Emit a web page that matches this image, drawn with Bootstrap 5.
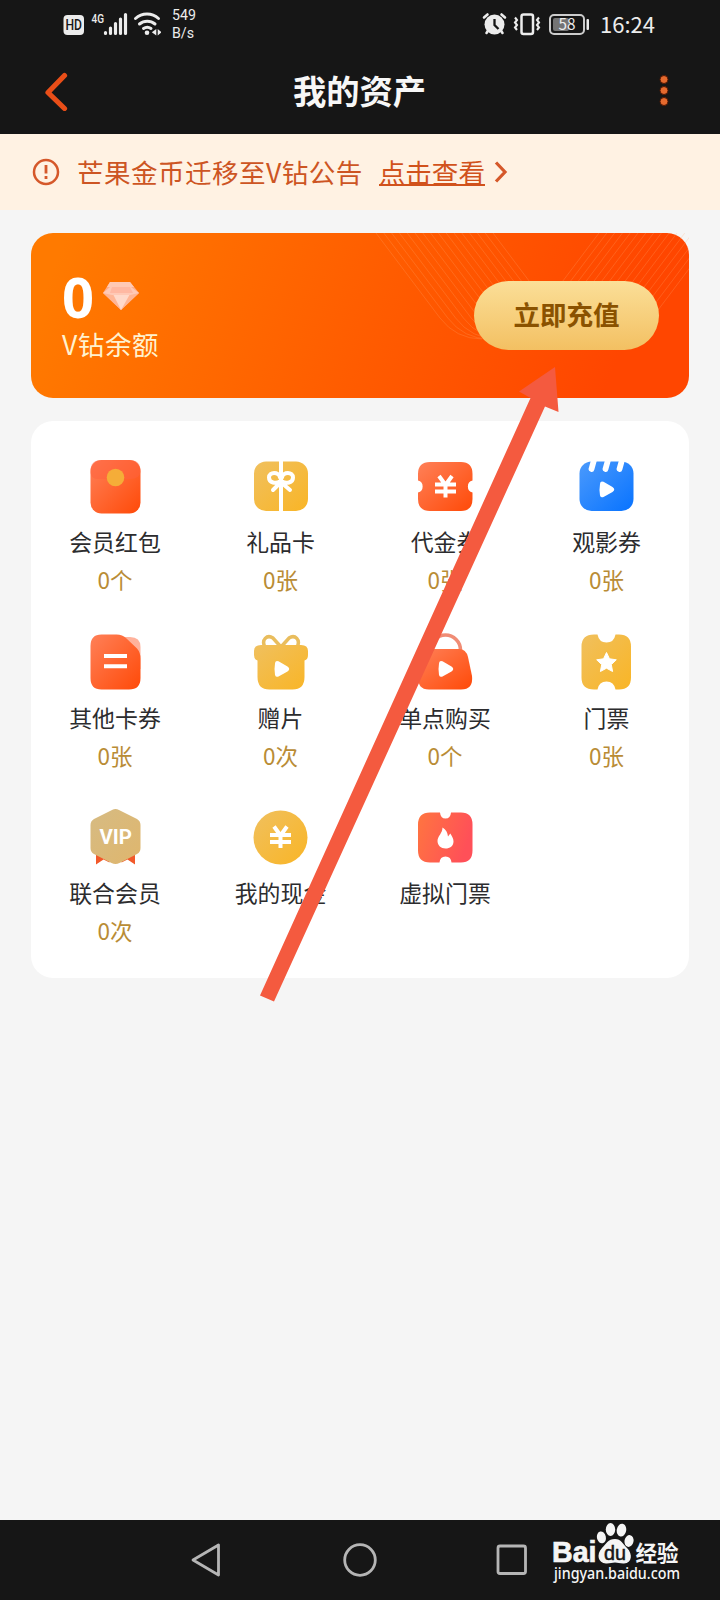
<!DOCTYPE html>
<html lang="zh-CN">
<head>
<meta charset="utf-8">
<meta name="viewport" content="width=device-width, initial-scale=1">
<title>我的资产</title>
<link rel="stylesheet" href="https://cdn.jsdelivr.net/npm/bootstrap@5.3.0/dist/css/bootstrap.min.css">
<style>
  body { background: #f5f5f5; font-family: "Noto Sans CJK SC", "Noto Sans", sans-serif; color: #2c2c2e; }
  .phone { width: 720px; height: 1600px; overflow: hidden; }
  .dark-bar { background: #161616; }
  svg { display: block; flex: none; }
  .status { height: 48px; padding: 0 66px 0 63px; color: #ececec; }
  .speed { font: 14.2px/18px Roboto, sans-serif; margin-left: 11px; }
  .clock { font-size: 22px; line-height: 46px; height: 48px; width: 54px; margin-left: 11px; white-space: nowrap; }
  .title-bar { height: 86px; padding: 0 50px 0 44px; }
  .title-bar h1 { font-size: 33.3px; line-height: 84px; height: 86px; font-weight: 700; color: #f7f7f7; margin-right: 8px !important; }
  .notice { height: 76px; background: #fff2e3; color: #cd5523; font-size: 26.6px; line-height: 74px; padding-left: 32px; }
  .notice-text { margin-left: 17px; letter-spacing: .4px; }
  .notice a { color: #d1521c; text-decoration: none; position: relative; margin-left: 16px; }
  .notice a::after { content: ""; position: absolute; left: 0; right: 0; bottom: 23px; height: 2px; background: #d1521c; }
  .balance { height: 165px; margin: 23px 31px 0; border-radius: 22px; padding: 0 30px 0 31px; background: linear-gradient(112deg, #ff7a00 5%, #ff5c00 52%, #ff4600 88%); }
  .rays { left: 0; top: 0; }
  .amount { font: 700 56px/56px "Open Sans", "Noto Sans", sans-serif; color: #fff; width: 32px; }
  .caption { font-size: 26.5px; line-height: 40px; letter-spacing: .6px; color: #fff2cf; }
  .recharge { width: 185px; height: 69px; font-size: 26.5px; font-weight: 700; color: #8a5200; border: 0; background: linear-gradient(#fbdf98, #f3c062); padding: 0 0 3px; position: relative; }
  .assets { height: 557px; margin: 23px 31px 0; border-radius: 22px; background: #fff; display: grid; grid-template-columns: 168px 163px 166px 157px; grid-auto-rows: 175.5px; padding-top: 36px; overflow: hidden; }
  .asset-name { font-size: 22.9px; line-height: 34px; margin-top: 7px; }
  .asset-count { font-size: 22.5px; line-height: 34px; margin-top: 4px; color: #b98c35; }
  .nav-keys { height: 80px; padding-left: 191px; }
  .pointer { left: 0; top: 0; pointer-events: none; }
</style>
</head>
<body>
<div class="phone position-relative d-flex flex-column">

  <header class="dark-bar">
    <div class="status d-flex align-items-center">
      <svg width="98" height="48" viewBox="63 0 98 48" fill="#ececec">
        <rect x="63.500" y="15" width="20.500" height="20" rx="4"/>
        <text x="65.500" y="30" font-family="Roboto" font-weight="500" font-size="14" textLength="16.500" lengthAdjust="spacingAndGlyphs" fill="#161616">HD</text>
        <text x="91.500" y="23" font-family="Roboto" font-weight="500" font-size="13" textLength="12.500" lengthAdjust="spacingAndGlyphs">4G</text>
        <g stroke="#ececec" stroke-width="3.200" stroke-linecap="round"><path d="M105.500 32.500v1M110.500 28v5.500M115.500 23.500v10M120.500 19v14.500M125.500 14.500v19"/></g>
        <g fill="none" stroke="#ececec" stroke-width="3" stroke-linecap="round"><path d="M135.500 18.500a17 17 0 0 1 23 0M139.500 24a12 12 0 0 1 15.500 0M143.500 28.500a6.500 6.500 0 0 1 7.500 0"/></g>
        <circle cx="147" cy="32.800" r="2.300"/><path d="M156.300 29v6.500l-4.500-3.200zM157.700 29l4 3.300-4 3.200z"/>
      </svg>
      <div class="speed">549<br>B/s</div>
      <svg class="ms-auto" width="107" height="48" viewBox="482 0 107 48" fill="#ececec">
        <path d="M484 17.500l3.500-3M505 17.500l-3.500-3M486.500 33l2-3M502.500 33l-2-3" stroke="#ececec" stroke-width="2.600" stroke-linecap="round"/>
        <circle cx="494.500" cy="24.500" r="10"/>
        <path d="M494.500 19v6l4 4" fill="none" stroke="#161616" stroke-width="2.300"/>
        <rect x="521.500" y="14.500" width="11.500" height="19.500" rx="2" fill="none" stroke="#ececec" stroke-width="2.500"/>
        <path d="M515 17.500l2 2.500-2 2.500 2 2.500-2 2.500 2 2.500M539 17.500l-2 2.500 2 2.500-2 2.500 2 2.500-2 2.500" fill="none" stroke="#ececec" stroke-width="2.100"/>
        <rect x="550" y="15" width="34" height="19" rx="4" fill="none" stroke="#ccc" stroke-width="2"/>
        <rect x="553" y="18" width="16" height="13" rx="2" fill="#747474"/>
        <rect x="586.500" y="19" width="2.500" height="11" rx="1"/>
        <text x="558.500" y="30" font-family="Noto Sans CJK SC" font-size="15.500" textLength="17" lengthAdjust="spacingAndGlyphs">58</text>
      </svg>
      <div class="clock">16:24</div>
    </div>
    <div class="title-bar d-flex align-items-center justify-content-between">
      <svg width="25" height="40" viewBox="0 0 25 40" fill="none" stroke="#e94e18" stroke-width="5.200" stroke-linecap="round" stroke-linejoin="round"><path d="M20.500 4.500L4 21.500l16.500 16"/></svg>
      <h1 class="m-0">我的资产</h1>
      <svg width="12" height="34" viewBox="0 0 12 34" fill="#e56a2e" stroke="#541702"><circle cx="6" cy="5.500" r="4"/><circle cx="6" cy="16.500" r="4"/><circle cx="6" cy="27.500" r="4"/></svg>
    </div>
  </header>

  <div class="notice d-flex align-items-center">
    <svg width="28" height="28" viewBox="0 0 28 28" fill="none" stroke="#d5582a" stroke-width="2.500"><circle cx="14" cy="14" r="12"/><path d="M14 7v8.500M14 18v3" stroke-width="2.800"/></svg>
    <span class="notice-text">芒果金币迁移至V钻公告</span>
    <a href="#">点击查看</a>
    <svg width="16" height="24" viewBox="0 0 16 24" fill="none" stroke="#d5582a" stroke-width="3.200" class="ms-2"><path d="M3 2.500l9 9.500-9 9.500"/></svg>
  </div>

  <section class="balance position-relative d-flex align-items-center justify-content-between">
    <svg class="rays position-absolute" width="658" height="165" viewBox="31 233 658 165" fill="none" stroke="#ffad70" stroke-opacity=".24"></svg>
    <div class="position-relative">
      <div class="d-flex align-items-center">
        <div class="amount">0</div>
        <svg width="38" height="32" viewBox="0 0 38 32" class="ms-2">
          <path d="M8 2h20l9 11-18 17L1 13z" fill="#ffad8b"/><path d="M8 2h20l4 5H5z" fill="#ffc9b5"/><path d="M1 13h36L19 30z" fill="#ffb595"/><path d="M11 14h17l-9 16z" fill="#ffd9ca"/><path d="M1 13l7-6h21l8 6-9 2H10z" fill="#ffc9b6"/><path d="M10 7h18l3 6H8z" fill="#ffb8a2"/>
        </svg>
      </div>
      <div class="caption">V钻余额</div>
    </div>
    <button class="btn recharge rounded-pill">立即充值</button>
  </section>

  <svg width="0" height="0" class="position-absolute">
    <defs>
      <linearGradient id="red" x1="0" y1="0" x2="1" y2="1"><stop stop-color="#ff8058"/><stop offset="1" stop-color="#ff4a08"/></linearGradient>
      <linearGradient id="gold" x1="0" y1="0" x2="1" y2="1"><stop stop-color="#f0c05e"/><stop offset="1" stop-color="#f9b526"/></linearGradient>
      <linearGradient id="blue" x1="0" y1="0" x2="1" y2="1"><stop stop-color="#4b9afc"/><stop offset="1" stop-color="#0873ff"/></linearGradient>
      <linearGradient id="pink" x1="0" y1="0" x2="1" y2=".3"><stop stop-color="#ff7540"/><stop offset="1" stop-color="#ff5058"/></linearGradient>
      <linearGradient id="tan" x1="0" y1="0" x2="1" y2="1"><stop stop-color="#d6bb83"/><stop offset="1" stop-color="#dfb66d"/></linearGradient>
      <path id="play" d="M-6.500-5.500q0-3.500 3.500-2.200L6-2.500q3.500 2.500 0 5L-3 7.500q-2.600 1.200-3.500-1.500-1-6 0-11.500z" fill="#fff"/>
      <path id="yen" d="M-6.500-11L0-2l6.500-9M-10.500-2.500h21M-10.500 4.500h21M0-3v13.500" fill="none" stroke="#fff" stroke-width="4"/>
    </defs>
  </svg>

  <main class="assets">
    <div class="d-flex flex-column align-items-center">
      <svg width="60" height="60"><rect x="5.500" y="3" width="50" height="53.500" rx="11" fill="url(#red)"/><path d="M5.500 14q0-11 11-11h28q11 0 11 11v1q-1 7-10 7h-32q-7 0-8-6z" fill="#ff623e" opacity=".5"/><circle cx="30.500" cy="20.500" r="8.800" fill="#f5ad38"/></svg>
      <div class="asset-name">会员红包</div><div class="asset-count">0个</div>
    </div>
    <div class="d-flex flex-column align-items-center">
      <svg width="60" height="60"><rect x="3" y="4.500" width="54" height="49.500" rx="12" fill="url(#gold)"/><g fill="none" stroke="#fff" stroke-width="4" stroke-linecap="round"><path d="M30 4v51" stroke-linecap="butt"/><path d="M29 24.500c-4 2.500-11 1.500-11-4 0-6 10-6 11 0M31 24.500c4 2.500 11 1.500 11-4 0-6-10-6-11 0M28 27l-6 6M32 27l7 6"/></g></svg>
      <div class="asset-name">礼品卡</div><div class="asset-count">0张</div>
    </div>
    <div class="d-flex flex-column align-items-center">
      <svg width="60" height="60"><path d="M15 5h31q11.500 0 11.500 12v6.500a6.200 6.200 0 0 0 0 12V42q0 12-11.500 12H15Q3 54 3 42v-6.500a6.200 6.200 0 0 0 0-12V17Q3 5 15 5z" fill="url(#red)"/><use href="#yen" x="30.500" y="30"/></svg>
      <div class="asset-name">代金券</div><div class="asset-count">0张</div>
    </div>
    <div class="d-flex flex-column align-items-center">
      <svg width="60" height="60"><rect x="2.500" y="4.500" width="54" height="49.500" rx="12" fill="url(#blue)"/><path d="M17 3l-2.500 9M31 3l-2.500 9M45 3l-2.500 9" stroke="#fff" stroke-width="5.800" stroke-linecap="round"/><use href="#play" x="29.500" y="32.500"/></svg>
      <div class="asset-name">观影券</div><div class="asset-count">0张</div>
    </div>

    <div class="d-flex flex-column align-items-center">
      <svg width="60" height="60"><path d="M28 4h17q10.500 0 10.500 10v22H28z" fill="#ffb29c"/><path d="M16.500 1.500h15q6 0 10 4l10.500 10q3.500 4 3.500 10V45q0 11.500-11.500 11.500H16.500Q5.500 56.500 5.500 45V13q0-11.500 11-11.500z" fill="url(#red)"/><path d="M19 23h23M19 33.300h23" stroke="#fff" stroke-width="4"/></svg>
      <div class="asset-name">其他卡券</div><div class="asset-count">0张</div>
    </div>
    <div class="d-flex flex-column align-items-center">
      <svg width="60" height="60"><path d="M14 14c-4-7 2-13 8-9l8 9 8-9c6-4 12 2 8 9" fill="none" stroke="#e9bd5d" stroke-width="3.500"/><path d="M10 12h40q7 0 7 6v4q0 4.500-3.500 5.500V44q0 12.500-12 12.500h-23Q6.500 56.500 6.500 44V27.500Q3 26.500 3 22v-4q0-6 7-6z" fill="url(#gold)"/><use href="#play" x="30.500" y="36"/></svg>
      <div class="asset-name">赠片</div><div class="asset-count">0次</div>
    </div>
    <div class="d-flex flex-column align-items-center">
      <svg width="60" height="60"><path d="M15.500 17a15 15 0 0 1 30 0" fill="none" stroke="#f08c75" stroke-width="3.500"/><path d="M17 16h27q7 0 9 8l4 19q1.500 13.500-11 13.500H14Q2 56.500 3.500 43l4-19q2-8 9.500-8z" fill="url(#red)"/><use href="#play" x="30.500" y="36"/></svg>
      <div class="asset-name">单点购买</div><div class="asset-count">0个</div>
    </div>
    <div class="d-flex flex-column align-items-center">
      <svg width="60" height="60"><path d="M17 1.500h3.500q1.500 8 9 8t9-8H42q12 0 12 12v31q0 12-12 12h-3.500q-1.500-8-9-8t-9 8H17Q4.500 56.500 4.500 44.500v-31Q4.500 1.500 17 1.500z" fill="url(#gold)"/><path d="M29.500 19.500l3 6.300 6.800 1-5 4.800 1.300 6.900-6.100-3.300-6.100 3.300 1.300-6.900-5-4.800 6.800-1z" fill="#fff" stroke="#fff" stroke-linejoin="round"/></svg>
      <div class="asset-name">门票</div><div class="asset-count">0张</div>
    </div>

    <div class="d-flex flex-column align-items-center">
      <svg width="60" height="60"><path d="M11 43v13.500l7.500-5 6 3v-9zM50 43v13.500l-7.500-5-6 3v-9z" fill="#f2592a"/><path d="M27 2q3.500-2 7 0l18 9q3.500 2 3.500 6v23q0 4-3.500 6l-17.500 9q-4 2-8 0L9 46q-3.500-2-3.500-6V17q0-4 3.500-6z" fill="url(#tan)"/><text x="14.500" y="35.500" fill="#fff" font-family="Roboto" font-weight="700" font-size="20.500" textLength="32.500" lengthAdjust="spacingAndGlyphs">VIP</text></svg>
      <div class="asset-name">联合会员</div><div class="asset-count">0次</div>
    </div>
    <div class="d-flex flex-column align-items-center">
      <svg width="60" height="60"><circle cx="29.500" cy="29.500" r="27" fill="url(#gold)"/><use href="#yen" x="29.500" y="29.500"/></svg>
      <div class="asset-name">我的现金</div>
    </div>
    <div class="d-flex flex-column align-items-center">
      <svg width="60" height="60"><path d="M15 4.500h10q.5 6 5.500 6t5.500-6h10q11.500 0 11.500 12v26q0 12-11.500 12H36.500q-.5-6-6-6t-6 6H15q-12 0-12-12v-26q0-12 12-12z" fill="url(#pink)"/><path d="M27.500 19.500c3.500 2 5 5 5.500 9l2.300-3c2 3 3.200 5.500 3.200 8 0 4.500-3.500 7-8 7s-8-3-8-7.500c0-5 5-7.500 5-13.500z" fill="#fff"/></svg>
      <div class="asset-name">虚拟门票</div>
    </div>
  </main>

  <footer class="nav-keys dark-bar mt-auto d-flex align-items-center">
    <svg width="30" height="36" viewBox="0 0 30 36" fill="none" stroke="#b5b5b5" stroke-width="2.800" stroke-linejoin="round"><path d="M27.500 3v30L2 18z"/></svg>
    <svg width="34" height="34" viewBox="0 0 34 34" fill="none" stroke="#b5b5b5" stroke-width="2.800" style="margin-left:122px"><circle cx="17" cy="17" r="15.300"/></svg>
    <svg width="32" height="32" viewBox="0 0 32 32" fill="none" stroke="#b5b5b5" stroke-width="2.800" style="margin-left:119px"><rect x="2" y="2" width="27.500" height="27.500" rx="2"/></svg>
    <svg width="140" height="80" viewBox="548 1520 140 80" fill="#f5f5f5" style="margin-left:20px">
      <text x="552" y="1562" font-family="Liberation Sans" font-weight="700" font-size="29" stroke="#f5f5f5" stroke-width=".7" textLength="44.500" lengthAdjust="spacingAndGlyphs">Bai</text>
      <ellipse cx="601.500" cy="1537.500" rx="4.500" ry="6" transform="rotate(-12 601 1538)"/>
      <ellipse cx="610.500" cy="1529.500" rx="4.700" ry="6.500"/>
      <ellipse cx="621.500" cy="1530" rx="4.700" ry="6.500" transform="rotate(10 621 1530)"/>
      <ellipse cx="629" cy="1541" rx="4.500" ry="6" transform="rotate(12 629 1541)"/>
      <path d="M615 1539c6 0 8 5 12 9 6 6 5 15-3 15.500-4 .2-6-1-9-1s-5 1.200-9 1c-8-.5-10-9-4-15.500 4-4 6-9 13-9z"/>
      <text x="604" y="1559.500" font-family="Liberation Sans" font-size="19.500" fill="#161616" stroke="#161616" stroke-width=".5" textLength="22" lengthAdjust="spacingAndGlyphs">du</text>
      <text x="635.500" y="1561" font-family="Noto Sans CJK SC" font-weight="700" font-size="21.500" textLength="43">经验</text>
      <text x="554" y="1579" font-family="Noto Sans" font-weight="500" font-size="15.500" textLength="126" lengthAdjust="spacingAndGlyphs">jingyan.baidu.com</text>
    </svg>
  </footer>

  <svg class="pointer position-absolute" width="720" height="1600" viewBox="0 0 720 1600"><path d="M555 367l3.500 45-13.500-5.500L274 1001.500l-14-6L530.500 398 519 391.500z" fill="#f45a3f"/></svg>
</div>

<script>
  // Fine parallel lines that fold into a rounded V behind the recharge button
  const rays = document.querySelector('.rays');
  for (let i = 0; i < 16; i++) {
    const a = 376 + i * 7.8, b = 1092 - a;
    const p = document.createElementNS('http://www.w3.org/2000/svg', 'path');
    p.setAttribute('d', `M${a} 233l64 85q16 21 42 21M${b} 233l-64 85`);
    rays.appendChild(p);
  }
</script>
<script src="https://cdn.jsdelivr.net/npm/bootstrap@5.3.0/dist/js/bootstrap.bundle.min.js"></script>
</body>
</html>
